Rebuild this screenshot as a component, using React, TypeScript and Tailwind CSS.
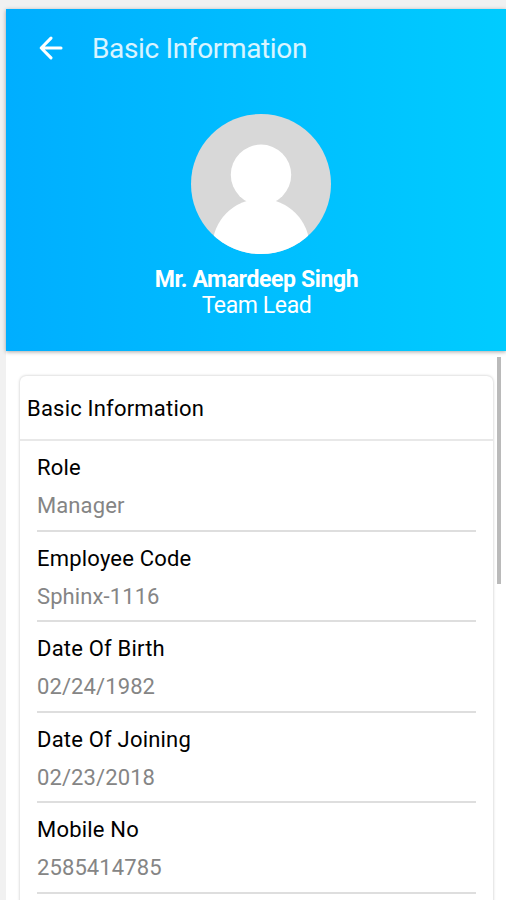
const details = [
  { label: "Role", value: "Manager" },
  { label: "Employee Code", value: "Sphinx-1116" },
  { label: "Date Of Birth", value: "02/24/1982" },
  { label: "Date Of Joining", value: "02/23/2018" },
  { label: "Mobile No", value: "2585414785" },
];

function BackArrow() {
  return (
    <svg
      viewBox="0 0 24 24"
      className="size-6"
      fill="none"
      stroke="currentColor"
      strokeWidth="3.1"
      strokeLinecap="round"
      strokeLinejoin="round"
    >
      <path d="M22 12H2.5M12 2.2L2.2 12L12 21.8" />
    </svg>
  );
}

function Avatar() {
  return (
    <svg viewBox="0 0 140 140" className="size-[140px]">
      <clipPath id="avatar">
        <circle cx="70" cy="70" r="70" />
      </clipPath>
      <g clipPath="url(#avatar)">
        <rect width="140" height="140" fill="#d8d8d8" />
        <circle cx="70" cy="60.8" r="30.2" fill="#fff" />
        <circle cx="70" cy="133.5" r="48.7" fill="#fff" />
      </g>
    </svg>
  );
}

function Header() {
  return (
    <header className="relative z-10 h-[342px] bg-linear-to-r from-[#00aeff] to-[#00ccff] text-white shadow-[0_1px_4px_rgba(0,0,0,0.35)]">
      <div className="flex h-[78px] items-center pl-[33px]">
        <button>
          <BackArrow />
        </button>
        <h1 className="ml-[29px] pt-px text-[28px] tracking-[-0.35px] text-white/85">Basic Information</h1>
      </div>
      <div className="flex flex-col items-center pt-[27px] pl-[9px]">
        <Avatar />
        <div className="mt-[12px] pr-2 text-center text-[23px]">
          <p className="leading-[27px] font-bold tracking-[-0.38px]">Mr. Amardeep Singh</p>
          <p className="leading-[26px] tracking-[-0.4px]">Team Lead</p>
        </div>
      </div>
    </header>
  );
}

export default function App() {
  return (
    <main className="h-[900px] overflow-hidden bg-[#f1f1f1] pt-[9px] pl-1.5 font-[Roboto,sans-serif]">
      <Header />
      <div className="flex h-full justify-between bg-white">
        <section className="mt-[25px] ml-3.5 w-[473px] rounded-md bg-white shadow-[0_0_3px_rgba(0,0,0,0.25)]">
          <h2 className="h-[65px] border-b-2 border-[#e8e8e8] pl-[7px] text-[22px]/[65px] tracking-[0.2px] text-black">
            Basic Information
          </h2>
          <ul className="px-[17px]">
            {details.map((item) => (
              <li key={item.label} className="h-[90.6px] border-b-2 border-[#dedede] pt-3.5">
                <p className="text-[22px]/[26px] tracking-[0.2px] text-black">{item.label}</p>
                <p className="mt-3 text-[22px]/[26px] tracking-[0.1px] text-[#858585]">{item.value}</p>
              </li>
            ))}
          </ul>
        </section>
        {/* Scrollbar */}
        <div className="mt-1.5 mr-[5px] h-[227px] w-1 bg-[#bababa]"></div>
      </div>
    </main>
  );
}
